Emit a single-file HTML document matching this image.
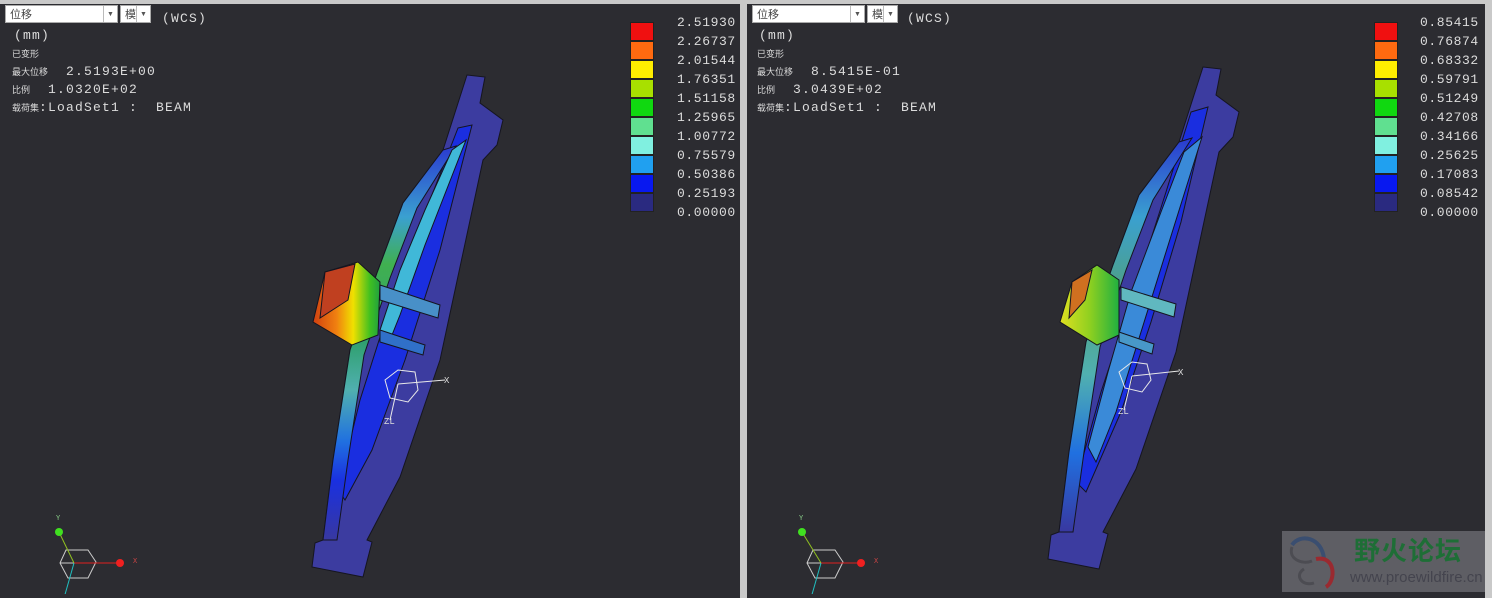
<!DOCTYPE html>
<html><head><meta charset="utf-8"><style>
body{margin:0;width:1492px;height:598px;overflow:hidden;background:#c9c9c9;font-family:"Liberation Mono","Noto Sans CJK SC",monospace;position:relative}
.p{position:absolute;top:4px;height:594px;background:#2c2c31;overflow:hidden}
.t{position:absolute;color:#dcdcdc;white-space:pre;font-size:13px;letter-spacing:1.2px;line-height:14px}
.s{font-size:9px;letter-spacing:0}
.dd{position:absolute;top:1px;height:18px;background:#fff;border:1px solid #aaa;font-size:11px;color:#444;line-height:18px;padding-left:4px;box-sizing:border-box;font-family:"Liberation Sans","Noto Sans CJK SC",sans-serif}
.ar{position:absolute;right:0;top:0;width:13px;height:16px;border-left:1px solid #bbb;font-size:7px;text-align:center;color:#555}
.leg div{height:19px;width:24px;box-sizing:border-box;border:1px solid #222}
.lv{letter-spacing:.6px;font-size:13px}
</style></head><body>

<svg width="0" height="0" style="position:absolute">
 <defs>
  <linearGradient id="fl" x1="0" y1="0" x2="0" y2="1">
   <stop offset="0" stop-color="#2a3ad0"/><stop offset=".18" stop-color="#3aa0d0"/><stop offset=".3" stop-color="#40b050"/><stop offset=".5" stop-color="#30a070"/><stop offset=".62" stop-color="#50b0b0"/><stop offset=".75" stop-color="#2070e0"/><stop offset=".85" stop-color="#1a30e0"/><stop offset="1" stop-color="#3838a0"/>
  </linearGradient>
  <linearGradient id="fl2" x1="0" y1="0" x2="0" y2="1">
   <stop offset="0" stop-color="#2a3ad0"/><stop offset=".2" stop-color="#3aa0d0"/><stop offset=".4" stop-color="#50a080"/><stop offset=".6" stop-color="#50b0b0"/><stop offset=".8" stop-color="#2070e0"/><stop offset="1" stop-color="#3838a0"/>
  </linearGradient>
  <linearGradient id="br" x1="0" y1="0" x2="1" y2="0">
   <stop offset="0" stop-color="#d04010"/><stop offset=".35" stop-color="#f08010"/><stop offset=".6" stop-color="#f0e000"/><stop offset=".85" stop-color="#40c020"/><stop offset="1" stop-color="#20a040"/>
  </linearGradient>
  <linearGradient id="br2" x1="0" y1="0" x2="1" y2="0">
   <stop offset="0" stop-color="#e0e020"/><stop offset=".5" stop-color="#90d020"/><stop offset="1" stop-color="#20b040"/>
  </linearGradient>
 </defs>
</svg>

<div class="p" style="left:0;width:740px">
 <div class="dd" style="left:5px;width:113px">位移<div class="ar">▼</div></div>
 <div class="dd" style="left:120px;width:31px">模<div class="ar">▼</div></div>
 <div class="t" style="left:162px;top:8px">(WCS)</div>
 <div class="t" style="left:14px;top:25px">(mm)</div>
 <div class="t s" style="left:12px;top:44px">已变形</div>
 <div class="t" style="left:12px;top:61px"><span class="s">最大位移</span>  2.5193E+00</div>
 <div class="t" style="left:12px;top:79px"><span class="s">比例</span>  1.0320E+02</div>
 <div class="t" style="left:12px;top:97px"><span class="s">载荷集</span>:LoadSet1 :  BEAM</div>
 <div class="leg" style="position:absolute;left:630px;top:18px">
  <div style="background:#f01010"></div><div style="background:#ff6a10"></div><div style="background:#ffee00"></div><div style="background:#a8e000"></div><div style="background:#10d810"></div><div style="background:#60e090"></div><div style="background:#80f0e0"></div><div style="background:#20a0f0"></div><div style="background:#0818f0"></div><div style="background:#2a2a80"></div>
 </div>
 <div class="t lv" style="left:677px;top:9px;line-height:19px">2.51930
2.26737
2.01544
1.76351
1.51158
1.25965
1.00772
0.75579
0.50386
0.25193
0.00000</div>
 <svg width="740" height="594" style="position:absolute;left:0;top:-4px">
  <g stroke="#151520" stroke-width="1">
   <polygon points="467,75 485,77 480,103 503,120 497,145 483,160 440,360 400,477 367,540 372,542 363,577 312,567 315,543 323,540 333,460 350,350 377,273 403,203 443,150" fill="#3c3ca0"/>
   <polygon points="458,128 472,125 440,250 405,360 372,450 345,500 338,490 360,400 395,290 430,200" fill="#1a2ee0"/>
   <polygon points="443,150 456,146 417,208 390,278 364,355 348,460 337,540 323,540 333,460 350,350 377,273 403,203" fill="url(#fl)"/>
   <polygon points="452,150 466,140 425,245 400,315 390,340 380,330 400,270 425,210" fill="#40b8d8"/>
   <polygon points="380,285 440,305 438,318 380,300" fill="#4890c8"/>
   <polygon points="380,330 425,345 423,355 380,342" fill="#3070c8"/>
   <polygon points="313,322 325,272 358,262 380,282 378,335 352,345" fill="url(#br)"/>
   <polygon points="325,272 355,264 348,300 320,318" fill="#c04020"/>
  </g>
  <g stroke="#e8e8e8" fill="none" stroke-width="1">
   <polygon points="385,380 398,370 415,372 418,390 408,402 390,398"/><line x1="398" y1="384" x2="445" y2="380"/><line x1="398" y1="384" x2="390" y2="420"/>
  </g>
  <text x="444" y="383" fill="#ddd" font-size="9">X</text><text x="384" y="424" fill="#ddd" font-size="9">ZL</text>
  <g fill="none" stroke="#ccc"><polygon points="66,550 88,550 96,562 88,578 68,578 60,563"/><line x1="60" y1="563" x2="96" y2="563"/></g>
  <line x1="59" y1="532" x2="74" y2="563" stroke="#90c020"/><circle cx="59" cy="532" r="4" fill="#40e020"/>
  <line x1="74" y1="563" x2="120" y2="563" stroke="#e02020"/><circle cx="120" cy="563" r="4" fill="#f02020"/>
  <line x1="74" y1="563" x2="64" y2="598" stroke="#20c0c0"/>
  <text x="56" y="520" fill="#8c8" font-size="7">Y</text><text x="133" y="563" fill="#c44" font-size="7">X</text>
 </svg>
</div>

<div class="p" style="left:747px;width:738px">
 <div class="dd" style="left:5px;width:113px">位移<div class="ar">▼</div></div>
 <div class="dd" style="left:120px;width:31px">模<div class="ar">▼</div></div>
 <div class="t" style="left:160px;top:8px">(WCS)</div>
 <div class="t" style="left:12px;top:25px">(mm)</div>
 <div class="t s" style="left:10px;top:44px">已变形</div>
 <div class="t" style="left:10px;top:61px"><span class="s">最大位移</span>  8.5415E-01</div>
 <div class="t" style="left:10px;top:79px"><span class="s">比例</span>  3.0439E+02</div>
 <div class="t" style="left:10px;top:97px"><span class="s">载荷集</span>:LoadSet1 :  BEAM</div>
 <div class="leg" style="position:absolute;left:627px;top:18px">
  <div style="background:#f01010"></div><div style="background:#ff6a10"></div><div style="background:#ffee00"></div><div style="background:#a8e000"></div><div style="background:#10d810"></div><div style="background:#60e090"></div><div style="background:#80f0e0"></div><div style="background:#20a0f0"></div><div style="background:#0818f0"></div><div style="background:#2a2a80"></div>
 </div>
 <div class="t lv" style="left:673px;top:9px;line-height:19px">0.85415
0.76874
0.68332
0.59791
0.51249
0.42708
0.34166
0.25625
0.17083
0.08542
0.00000</div>
 <svg width="738" height="594" style="position:absolute;left:0;top:-4px">
  <g stroke="#151520" stroke-width="1" transform="translate(-11,-8)">
   <polygon points="467,75 485,77 480,103 503,120 497,145 483,160 440,360 400,477 367,540 372,542 363,577 312,567 315,543 323,540 333,460 350,350 377,273 403,203 443,150" fill="#3c3ca0"/>
   <polygon points="455,120 472,115 445,230 415,330 385,420 350,500 340,490 365,400 398,300 430,200" fill="#1a2ee0"/>
   <polygon points="448,160 466,145 430,260 405,340 380,420 360,470 352,455 372,380 395,300 425,220" fill="#3a8ad8"/>
   <polygon points="443,150 456,146 417,208 390,278 364,355 348,460 337,540 323,540 333,460 350,350 377,273 403,203" fill="url(#fl2)"/>
   <polygon points="385,295 440,312 438,325 385,308" fill="#60b8c0"/>
   <polygon points="383,340 418,352 416,362 383,350" fill="#4898c8"/>
  </g>
  <g stroke="#151520" stroke-width="1">
   <polygon points="313,322 325,282 350,265 372,280 372,335 350,345" fill="url(#br2)"/>
   <polygon points="325,282 345,270 338,300 322,318" fill="#d07020"/>
  </g>
  <g stroke="#e8e8e8" fill="none" stroke-width="1">
   <polygon points="372,372 385,362 400,364 404,380 395,392 378,388"/><line x1="385" y1="376" x2="432" y2="371"/><line x1="385" y1="376" x2="377" y2="410"/>
  </g>
  <text x="431" y="375" fill="#ddd" font-size="9">X</text><text x="371" y="414" fill="#ddd" font-size="9">ZL</text>
  <g fill="none" stroke="#ccc"><polygon points="66,550 88,550 96,562 88,578 68,578 60,563"/><line x1="60" y1="563" x2="96" y2="563"/></g>
  <line x1="55" y1="532" x2="74" y2="563" stroke="#90c020"/><circle cx="55" cy="532" r="4" fill="#40e020"/>
  <line x1="74" y1="563" x2="114" y2="563" stroke="#e02020"/><circle cx="114" cy="563" r="4" fill="#f02020"/>
  <line x1="74" y1="563" x2="64" y2="598" stroke="#20c0c0"/>
  <text x="52" y="520" fill="#8c8" font-size="7">Y</text><text x="127" y="563" fill="#c44" font-size="7">X</text>
 </svg>
 <div style="position:absolute;left:535px;top:527px;width:203px;height:61px;background:#5e5e64">
  <svg width="60" height="60" style="position:absolute;left:2px;top:0">
   <path d="M8 14 C16 2 38 6 40 28" stroke="#3a4e70" stroke-width="4" fill="none"/>
   <path d="M32 28 C52 24 52 50 42 56" stroke="#9a2a30" stroke-width="4" fill="none"/>
   <path d="M8 16 C4 28 18 34 28 30 M20 38 C10 44 18 56 30 52" stroke="#4c4c52" stroke-width="3" fill="none"/>
  </svg>
  <div style="position:absolute;left:72px;top:4px;font:bold 26px 'Noto Sans CJK SC',sans-serif;color:#1e6e36;letter-spacing:1px;line-height:30px">野火论坛</div>
  <div style="position:absolute;left:68px;top:38px;font:15px 'Liberation Sans',sans-serif;color:#44444e;white-space:nowrap">www.proewildfire.cn</div>
 </div>
</div>
</body></html>
